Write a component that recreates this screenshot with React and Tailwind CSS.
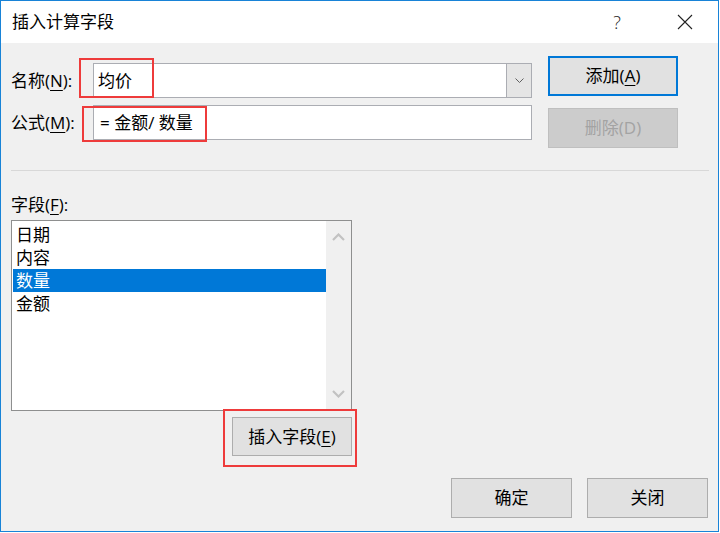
import React from 'react';

const font = { fontFamily: '"Open Sans", "Noto Sans CJK SC", sans-serif' };

const Key = ({ children }) => (
  <span className="underline underline-offset-[3px] decoration-1">{children}</span>
);

const Chevron = ({ up = false, className = '' }) => (
  <svg width="13" height="8" viewBox="0 0 13 8" className={className}>
    <path
      d={up ? 'M1 7 L6.5 1.5 L12 7' : 'M1 1 L6.5 6.5 L12 1'}
      fill="none"
      stroke="currentColor"
      strokeWidth="2.2"
    />
  </svg>
);

const fields = ['日期', '内容', '数量', '金额'];

export default function App() {
  return (
    <div className="w-[720px] h-[533px] bg-white relative text-black" style={font}>
      <div className="w-[719px] h-[532px] border border-[#1883d7] flex flex-col">
        {/* title bar */}
        <div className="h-[42px] bg-white flex items-center pl-[11px] pr-[10px] text-[17px] leading-[24px]">
          <span>插入计算字段</span>
          <div className="ml-auto flex items-center gap-[22px]">
            <span className="w-[46px] text-center text-[18px] font-light text-[#222]">?</span>
            <span className="w-[46px] flex justify-center">
              <svg width="16" height="16" viewBox="0 0 16 16">
                <path d="M1 1 L15 15 M15 1 L1 15" stroke="#222" strokeWidth="1.1" />
              </svg>
            </span>
          </div>
        </div>

        {/* body */}
        <div className="flex-1 bg-[#f0f0f0] flex flex-col text-[17px]">
          <div className="flex">
            <div className="ml-[10px] mt-[20px] flex flex-col gap-[7px]">
              <div className="flex items-center">
                <span className="w-[82px] leading-[24px]">名称(<Key>N</Key>):</span>
                <div className="w-[439px] h-[35px] bg-white border border-[#abadb3] flex">
                  <span className="flex-1 pl-[4px] leading-[33px]">均价</span>
                  <div className="w-[25px] bg-[#e5e5e5] border-l border-[#abadb3] flex items-center justify-center text-[#606060]">
                    <svg width="9" height="5" viewBox="0 0 9 5">
                      <path d="M0.5 0.5 L4.5 4.5 L8.5 0.5" fill="none" stroke="currentColor" strokeWidth="1" />
                    </svg>
                  </div>
                </div>
              </div>
              <div className="flex items-center">
                <span className="w-[82px] leading-[24px]">公式(<Key>M</Key>):</span>
                <div className="w-[439px] h-[35px] bg-white border border-[#abadb3] pl-[6px] leading-[33px]">
                  = 金额/ 数量
                </div>
              </div>
            </div>
            <div className="ml-[16px] mt-[13px] flex flex-col gap-[12px]">
              <button className="w-[130px] h-[40px] bg-[#e1e1e1] border-2 border-[#0078d7] leading-[24px]">
                添加(<Key>A</Key>)
              </button>
              <button className="w-[130px] h-[40px] bg-[#cccccc] border border-[#bfbfbf] text-[#a3a3a3] leading-[24px]">
                删除(D)
              </button>
            </div>
          </div>

          <div className="mt-[22px] ml-[10px] mr-[9px] border-t border-[#d8d8d8]" />

          <div className="ml-[10px] mt-[22px] w-[341px] flex flex-col items-end">
            <span className="self-start h-[23px] leading-[23px]">字段(<Key>F</Key>):</span>
            <div className="mt-[4px] w-[341px] h-[191px] bg-white border border-[#8e8f8f] flex">
              <div className="flex-1 pl-px pt-[2px]">
                {fields.map((f, i) => (
                  <div
                    key={f}
                    className={
                      i === 2
                        ? 'h-[23px] leading-[23px] pl-[3px] bg-[#0078d7] text-white'
                        : 'h-[23px] leading-[23px] pl-[3px]'
                    }
                  >
                    {f}
                  </div>
                ))}
              </div>
              <div className="w-[25px] bg-[#f0f0f0] flex flex-col items-center justify-between py-[12px] text-[#c2c2c2]">
                <Chevron up />
                <Chevron />
              </div>
            </div>
            <button className="mt-[6px] w-[120px] h-[39px] bg-[#e1e1e1] border border-[#adadad] leading-[24px]">
              插入字段(<Key>E</Key>)
            </button>
          </div>

          <div className="mt-[22px] mr-[10px] flex justify-end gap-[15px]">
            <button className="w-[121px] h-[40px] bg-[#e1e1e1] border border-[#adadad] leading-[24px]">确定</button>
            <button className="w-[121px] h-[40px] bg-[#e1e1e1] border border-[#adadad] leading-[24px]">关闭</button>
          </div>
        </div>
      </div>

      {/* red annotation boxes */}
      <div className="absolute left-[79px] top-[58px] w-[75px] h-[40px] border-2 border-[#ee3b3b]" />
      <div className="absolute left-[82px] top-[106px] w-[125px] h-[36px] border-2 border-[#ee3b3b]" />
      <div className="absolute left-[223px] top-[409px] w-[134px] h-[58px] border-2 border-[#ee3b3b]" />
    </div>
  );
}
